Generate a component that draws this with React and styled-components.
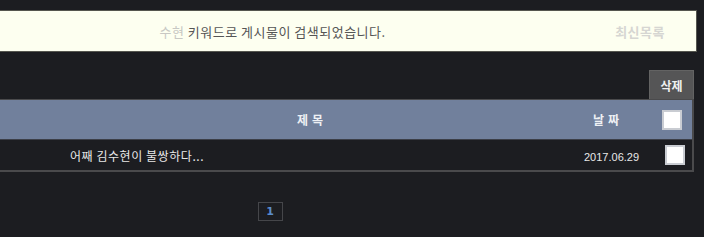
import React from 'react'
import styled, { createGlobalStyle } from 'styled-components'

const PAGE_BG = '#1c1d21'
const LINE = '#4a4a4c'
const HEAD_BG = '#71809c'

const GlobalStyle = createGlobalStyle`
  html, body {
    margin: 0;
    padding: 0;
    background: ${PAGE_BG};
  }
  body {
    font-family: "Noto Sans CJK KR", "Noto Sans", sans-serif;
    font-size: 12px;
  }
`

const Page = styled.div`
  width: 697px;
  padding-top: 10px;
`

const Notice = styled.div`
  display: flex;
  align-items: center;
  height: 40px;
  border: 1px solid #55564f;
  border-left: none;
  background: #fdfff0;
  padding-right: 31px;
  gap: 70px;
  font-size: 13px;
  letter-spacing: 0.5px;
`

const NoticeText = styled.p`
  flex: 1;
  margin: 0;
  text-align: center;
  color: #555;
  span { color: #c8c8c4; }
`

const LatestLink = styled.a`
  color: #d6d6d2;
  text-decoration: none;
  font-weight: bold;
`

const Toolbar = styled.div`
  display: flex;
  justify-content: flex-end;
  padding: 18px 3px 0 0;
`

const DeleteButton = styled.button`
  width: 45px;
  height: 29px;
  border: 1px solid #636363;
  border-bottom: none;
  background: #555556;
  color: #f0f0f0;
  font-family: inherit;
  font-size: 12px;
  font-weight: bold;
  cursor: pointer;
`

const Board = styled.div`
  width: 694px;
  border: 2px solid ${LINE};
  border-left: none;
  border-top: 1px solid ${LINE};
  box-sizing: border-box;
`

const Row = styled.div`
  display: grid;
  grid-template-columns: 64px 496px 96px 1fr;
  align-items: center;
  height: ${p => (p.$head ? '39px' : '30px')};
  background: ${p => (p.$head ? HEAD_BG : PAGE_BG)};
  color: ${p => (p.$head ? '#eef0f4' : '#e8e8e8')};
  font-weight: ${p => (p.$head ? 'bold' : 'normal')};
  border-bottom: ${p => (p.$head ? `1px solid #3c3f48` : 'none')};
`

const Cell = styled.div`
  text-align: ${p => p.$align || 'center'};
  padding-left: ${p => p.$pad || 0}px;
  letter-spacing: ${p => (p.$wide ? '4px' : '0.55px')};
  white-space: nowrap;
  overflow: hidden;
`

const Check = styled.span`
  display: inline-block;
  width: 16px;
  height: 16px;
  background: #fff;
  border: 2px solid #c9ccd2;
  vertical-align: middle;
  margin-left: ${p => p.$shift || 0}px;
`

const DateText = styled.span`
  font-family: "Liberation Sans", "Noto Sans", sans-serif;
  font-size: 11px;
  letter-spacing: 0;
  padding-left: 24px;
`

const Pager = styled.div`
  display: flex;
  justify-content: center;
  padding: 30px 157px 0 0;
`

const PageNum = styled.a`
  display: flex;
  align-items: center;
  justify-content: center;
  width: 23px;
  height: 17px;
  border: 1px solid #45464a;
  color: #5a8ccc;
  font-family: "DejaVu Sans", sans-serif;
  font-weight: bold;
  font-size: 11px;
  text-decoration: none;
`

export default function App() {
  return (
    <Page>
      <GlobalStyle />
      <Notice>
        <NoticeText><span>수현</span> 키워드로 게시물이 검색되었습니다.</NoticeText>
        <LatestLink href="#">최신목록</LatestLink>
      </Notice>
      <Toolbar>
        <DeleteButton>삭제</DeleteButton>
      </Toolbar>
      <Board>
        <Row $head>
          <Cell />
          <Cell $wide>제목</Cell>
          <Cell $wide>날짜</Cell>
          <Cell><Check $shift={-4} /></Cell>
        </Row>
        <Row>
          <Cell />
          <Cell $align="left" $pad={6}>어째 김수현이 불쌍하다...</Cell>
          <Cell $align="left"><DateText>2017.06.29</DateText></Cell>
          <Cell><Check $shift={2} /></Cell>
        </Row>
      </Board>
      <Pager>
        <PageNum href="#">1</PageNum>
      </Pager>
    </Page>
  )
}
